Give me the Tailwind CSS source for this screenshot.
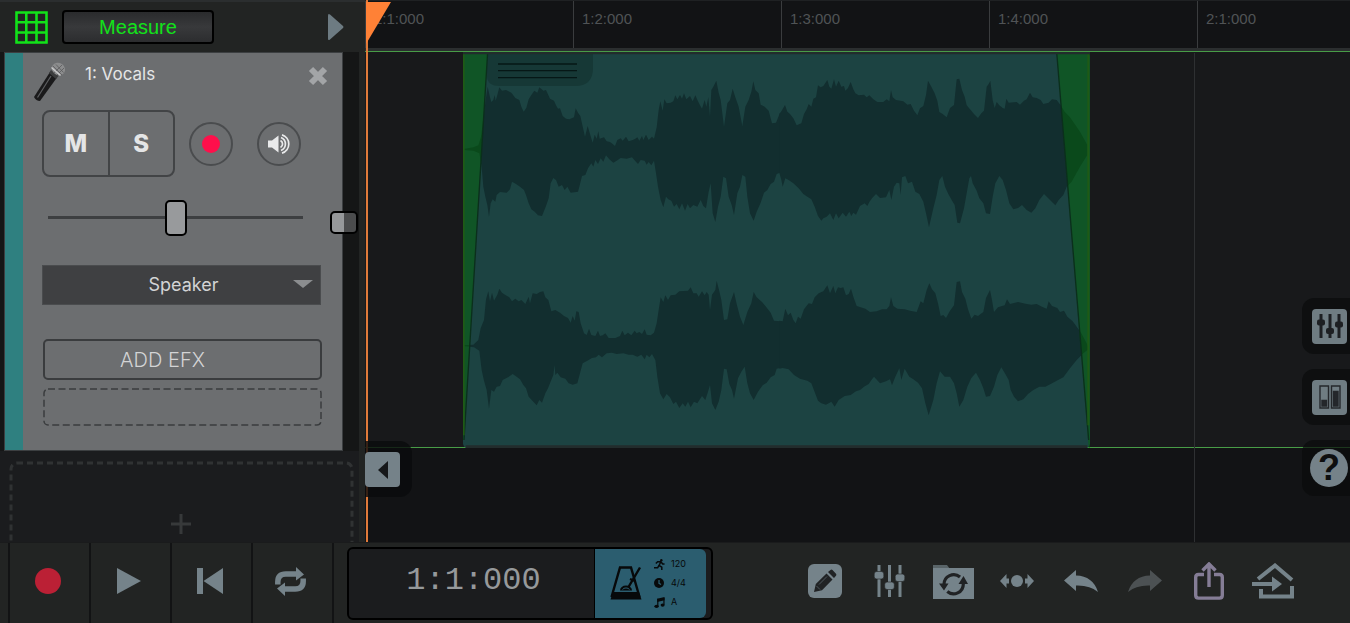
<!DOCTYPE html>
<html lang="en">
<head>
  <meta charset="UTF-8" />
  <meta name="viewport" content="width=device-width, initial-scale=1.0"/>
  <title>Multitrack Editor</title>
  <script src="https://cdn.jsdelivr.net/npm/@tailwindcss/browser@4"></script>
</head>
<body class="min-h-screen flex flex-col overflow-hidden bg-[#121315] text-[#e4e5e6] font-['Inter',sans-serif]">

  <main class="flex flex-1">
    <!-- Track list -->
    <section class="w-[365px] shrink-0 flex flex-col bg-[#222423]">
      <header class="h-[52px] flex items-center pl-[14px] pr-[21px] border-t-2 border-[#2b2e2f]">
        <button type="button" aria-label="Grid">
          <svg class="size-[34px]" viewBox="0 0 34 34" fill="none" stroke="#12e21a" stroke-width="2.6">
            <path d="M2.5 2.5h30v30h-30zM12.3 2.5v30M22.5 2.5v30M2.5 12.3h30M2.5 22.5h30"/>
          </svg>
        </button>
        <button type="button" class="ml-[14px] h-[34px] w-[152px] rounded border-2 border-black bg-linear-to-b from-[#2a2b2d] via-[#38393b] to-[#2c2d2f] text-xl leading-none text-[#12e21a] font-['Liberation_Sans',sans-serif]">Measure</button>
        <button type="button" aria-label="Expand" class="ml-auto">
          <svg class="w-4 h-7" viewBox="0 0 16 28" fill="#6d7b82"><path d="M0 2.5Q0 0 2 1.500L15 13q1 1 0 2L2 26.500Q0 28 0 25.500z"/></svg>
        </button>
      </header>

      <div class="relative flex mr-[6px] bg-[#151616]">
        <article class="ml-1 w-[339px] flex border border-[#3c3f41] bg-[#6c6e70]">
          <div class="w-[18px] bg-[#2f8080]"></div>
          <div class="flex-1 pl-[19px] pr-5 pt-[9px] pb-6">
            <div class="flex items-start">
              <svg class="-ml-2 w-8 h-10" viewBox="0 0 32 40">
                <path d="M0 35L16 10l7 5.500L6 39q-4 0-6-4z" fill="#1a1a1b"/>
                <path d="M3.500 35.500L17 14" stroke="#5d5f61" stroke-width="1.200"/>
                <path d="M15 11l2-3 7.500 6-2.500 3z" fill="#3b3c3d"/>
                <ellipse cx="24.500" cy="7" rx="6.800" ry="6" fill="#8b8c8d" transform="rotate(35 24.500 7)"/>
                <path d="M19 4l9 9M22 2.500l7.500 8M20 11l8-8M23 13l7-7" stroke="#5a5b5c" stroke-width=".8"/>
                <path d="M17.500 5.500l9 8" stroke="#c9cacb" stroke-width="1.300"/>
              </svg>
              <h2 class="ml-[19px] text-[17px] leading-6">1: Vocals</h2>
              <button type="button" aria-label="Remove track" class="ml-auto mt-1 -mr-1.5">
                <svg class="size-5" viewBox="0 0 20 20" stroke="#a3a5a7" stroke-width="6"><path d="M3 3l14 14M17 3L3 17"/></svg>
              </button>
            </div>

            <div class="mt-2 flex items-center">
              <div class="flex w-[133px] h-[67px] rounded-lg border-2 border-[#424446] text-2xl font-extrabold">
                <button type="button" class="flex-1 border-r-2 border-[#424446]">M</button>
                <button type="button" class="flex-1">S</button>
              </div>
              <button type="button" aria-label="Arm recording" class="ml-[14px] size-11 flex items-center justify-center rounded-full border-2 border-[#4a4c4e]">
                <span class="size-[18px] rounded-full bg-[#ff0f4b]"></span>
              </button>
              <button type="button" aria-label="Monitor" class="ml-6 size-11 flex items-center justify-center rounded-full border-2 border-[#4a4c4e]">
                <svg class="w-[22px] h-5" viewBox="0 0 22 20" fill="none" stroke="#e9eaeb" stroke-width="1.700">
                  <path d="M0 6.500h4L10.500 1.500v17L4 13.500H0z" fill="#e9eaeb" stroke="none"/>
                  <path d="M12.500 6.500a4 4 0 0 1 0 7M13 3.500a7 7 0 0 1 0 13M14 .9a9.500 9.500 0 0 1 0 18.200"/>
                </svg>
              </button>
            </div>

            <input type="range" aria-label="Pan" min="0" max="100" value="50" class="mt-[22px] ml-1.5 block w-[255px] h-9 appearance-none bg-transparent [&::-webkit-slider-runnable-track]:h-[3px] [&::-webkit-slider-runnable-track]:bg-[#3d3f41] [&::-webkit-slider-thumb]:appearance-none [&::-webkit-slider-thumb]:-mt-4 [&::-webkit-slider-thumb]:w-[22px] [&::-webkit-slider-thumb]:h-9 [&::-webkit-slider-thumb]:rounded-[5px] [&::-webkit-slider-thumb]:border-2 [&::-webkit-slider-thumb]:border-black [&::-webkit-slider-thumb]:bg-[#989a9c]"/>

            <div class="relative mt-[30px]">
              <select aria-label="Output" class="block w-[279px] h-10 appearance-none border border-[#4a4c4e] bg-[#3f4042] pl-6 pr-5 text-center [text-align-last:center] text-lg text-[#d3d4d5]">
                <option>Speaker</option>
                <option>Headphones</option>
              </select>
              <svg class="pointer-events-none absolute right-[9px] top-[15px] w-5 h-2" viewBox="0 0 20 8" fill="#8b8d8f"><path d="M0 0h20L10 8z"/></svg>
            </div>

            <button type="button" class="mt-[34px] ml-px block w-[279px] h-[41px] rounded-[5px] border-2 border-[#3a3c3e] pr-10 text-xl font-light text-[#d3d4d5]">ADD EFX</button>
            <svg class="mt-2 ml-px block w-[279px] h-[38px]" viewBox="0 0 279 38" fill="none" stroke="#3a3c3e" stroke-width="1.500" stroke-dasharray="7 3.500"><rect x="1" y="1" width="277" height="36" rx="4"/></svg>
          </div>
        </article>
        <button type="button" aria-label="Track volume" class="absolute right-px top-[159px] w-7 h-[23px] rounded-[5px] border-2 border-black bg-linear-to-r from-[#96989a] from-50% to-[#4b4c4d] to-50%"></button>
      </div>

      <div class="flex-1 mr-[6px] pl-[9px] pr-1 pt-[9px] bg-[#1b1c1e]">
        <button type="button" aria-label="Add track" class="relative block w-full h-full overflow-hidden">
          <svg class="absolute inset-0 w-[346px] h-[100px]" viewBox="0 0 346 100" fill="none" stroke="#303233" stroke-width="3" stroke-dasharray="6 4"><rect x="2" y="3" width="341" height="110" rx="6"/></svg>
          <svg class="absolute left-[162px] bottom-2 size-5" viewBox="0 0 20 20" stroke="#37393a" stroke-width="3"><path d="M10 0v20M0 10h20"/></svg>
        </button>
      </div>
    </section>

    <!-- Timeline -->
    <section class="relative flex-1 flex flex-col min-w-0 overflow-hidden">
      <div class="h-12 flex overflow-hidden border-t border-[#1f2123] bg-[#121315] font-['Liberation_Sans',sans-serif] text-[15px] leading-9 text-[#505355]">
        <div class="w-52 shrink-0 border-l border-[#3a3c3e] pl-2">1:1:000</div>
        <div class="w-52 shrink-0 border-l border-[#3a3c3e] pl-2">1:2:000</div>
        <div class="w-52 shrink-0 border-l border-[#3a3c3e] pl-2">1:3:000</div>
        <div class="w-52 shrink-0 border-l border-[#3a3c3e] pl-2">1:4:000</div>
        <div class="w-52 shrink-0 border-l border-[#3a3c3e] pl-2">2:1:000</div>
      </div>
      <div class="h-[3px] bg-[#2b2e2f]"></div>
      <div class="h-px bg-[#489c47]"></div>
      <div class="relative h-[395px] bg-[#18191b]">
        <!-- Audio clip with fades, three units per pixel -->
        <svg class="absolute left-[98px] top-0 w-[627px] h-[396px]" viewBox="0 0 1881 1188">
          <rect width="1881" height="1188" rx="14" fill="#1c4342"/>
          <path d="M72 0H390V48q0 54-54 54H110q-38 0-38-30z" fill="#163836"/>
          <path d="M105 36H342M105 56H342M105 77H342" stroke="#061716" stroke-width="4"/>
          <g fill="#122e2f">
            <polygon transform="translate(-39 -36)" points="40,327 70,322 85,316 93,290 100,235 107,180 113,140 119,168 124,186 130,180 134,165 137,182 142,165 148,142 156,152 168,150 184,158 196,174 208,180 214,200 221,215 229,204 236,178 244,165 253,152 262,158 268,142 280,152 288,150 300,176 312,182 318,196 324,206 330,205 338,228 348,236 358,238 372,232 377,205 384,218 391,228 397,255 405,290 413,258 420,282 428,308 434,284 440,296 445,274 449,296 462,292 470,304 480,306 488,312 495,318 502,300 512,295 518,302 528,290 536,304 548,300 556,296 562,292 568,302 576,288 580,300 588,284 596,300 606,290 612,296 620,262 626,210 631,184 638,212 643,178 650,190 662,188 670,184 676,166 682,178 690,165 696,176 702,160 709,178 720,168 728,184 736,166 744,184 750,196 756,206 764,180 769,200 775,172 780,230 784,150 790,140 799,122 806,158 812,180 822,260 832,190 840,180 848,146 856,172 866,200 877,258 886,200 896,180 904,155 910,124 916,150 926,160 932,194 944,200 956,212 966,250 978,248 990,218 990,398 980,402 972,425 962,432 952,450 942,458 932,488 920,515 911,542 900,520 892,470 886,410 877,405 870,440 862,460 852,525 845,495 836,470 828,415 820,410 812,470 804,500 796,546 788,520 782,430 776,455 768,505 760,498 752,480 742,500 730,495 720,505 713,492 705,512 696,490 688,508 680,492 672,500 664,482 655,478 648,470 640,502 632,480 624,440 618,400 612,362 604,376 596,366 590,374 584,362 572,360 564,372 555,362 546,352 530,356 512,354 500,362 490,368 478,358 468,346 460,365 452,355 444,372 436,360 430,380 424,370 414,385 406,405 396,408 388,440 384,455 362,458 352,440 344,450 336,435 326,440 318,420 310,414 302,430 296,475 288,498 276,528 264,526 254,515 244,508 236,490 228,465 222,450 210,440 198,432 186,425 180,448 170,458 150,456 140,465 136,485 128,478 122,490 117,530 112,495 106,470 100,440 95,380 88,340 70,332 40,330"/>
            <polygon transform="translate(921 -36)" points="28,222 34,214 45,195 52,215 60,222 70,235 80,256 94,250 102,222 110,208 116,192 124,200 130,176 138,172 144,136 152,142 160,138 172,120 178,140 184,146 192,118 198,140 206,122 214,140 222,138 226,152 234,144 242,126 250,148 256,160 266,166 282,164 290,172 298,166 310,178 322,186 340,186 350,178 358,184 363,150 368,172 378,180 400,184 412,194 422,192 432,212 442,226 450,205 460,198 468,165 474,122 484,140 494,160 502,182 508,216 518,222 530,232 540,204 552,195 560,118 568,116 576,150 584,170 590,196 602,210 612,222 624,234 634,220 642,212 650,140 656,132 661,122 668,180 674,204 680,186 688,196 698,204 704,206 709,176 716,188 740,186 750,194 762,182 770,178 780,158 788,172 800,174 812,180 820,192 836,188 846,178 860,180 872,196 884,215 900,232 930,275 952,315 952,345 930,380 905,425 890,440 880,465 866,480 856,496 846,486 834,474 822,462 808,480 796,505 784,518 770,510 756,495 744,504 730,508 718,490 708,450 698,420 688,408 676,430 668,470 660,522 648,520 640,490 628,475 620,452 608,430 603,408 598,415 590,460 582,505 570,550 562,548 554,495 545,480 535,462 525,440 517,408 508,420 500,465 490,505 477,562 468,520 460,485 448,462 436,455 426,425 414,430 406,408 396,412 392,465 388,430 380,428 372,440 364,480 358,450 348,472 330,474 318,462 306,475 298,486 292,498 284,490 270,498 258,524 250,518 244,528 238,515 228,530 218,518 206,535 198,520 190,540 180,520 170,530 160,535 154,542 144,528 134,500 124,478 112,470 100,462 86,445 70,430 56,420 46,415 38,440 34,420 28,398"/>
            <polygon transform="translate(-39 624)" points="40,256 70,254 85,240 92,205 102,180 108,118 115,94 120,124 126,98 132,122 142,104 148,86 156,98 166,105 178,112 186,124 196,116 206,124 214,120 226,132 236,110 240,130 248,100 260,102 270,96 280,94 286,112 295,120 304,154 316,150 330,158 342,168 354,174 362,188 368,168 374,182 379,154 386,156 392,190 402,220 410,225 417,206 424,225 436,228 444,212 450,228 458,226 466,220 476,234 496,234 510,228 517,212 524,226 534,218 544,226 554,212 560,220 568,216 576,222 584,208 590,224 602,226 612,218 620,190 626,150 632,112 640,126 646,106 654,120 662,106 676,104 688,94 714,92 722,82 730,100 740,100 746,110 756,94 764,106 770,96 776,104 780,150 786,104 796,90 800,62 808,94 814,120 822,180 832,178 840,130 852,96 860,132 870,170 880,195 892,156 904,130 911,96 920,112 936,126 948,140 962,158 972,182 990,184 990,324 980,326 974,345 962,352 950,368 938,376 924,395 911,420 900,400 892,370 884,320 874,335 864,355 852,416 846,390 838,372 830,328 822,326 814,390 806,425 796,450 786,430 780,375 774,395 766,420 756,408 742,430 732,425 722,442 714,425 706,440 698,430 688,444 678,425 670,432 660,412 650,402 640,418 630,400 622,350 616,300 606,282 598,292 590,284 584,298 574,284 562,290 548,284 536,284 520,280 500,282 486,278 470,280 456,292 446,284 438,292 426,294 412,302 398,310 390,340 382,370 368,374 356,370 346,356 332,352 322,338 316,345 314,315 310,345 300,370 294,385 286,400 276,428 268,420 260,436 250,425 236,410 228,385 220,375 210,358 200,350 188,342 174,352 158,360 150,378 140,380 132,395 124,390 117,446 110,390 102,362 95,330 88,272 72,262 40,258"/>
            <polygon transform="translate(921 624)" points="28,182 38,184 46,146 54,166 62,158 70,180 77,190 84,170 92,176 102,148 116,130 126,132 134,112 146,100 160,94 172,76 180,100 190,78 196,100 204,82 212,84 220,82 228,106 236,102 243,86 250,110 260,138 272,142 286,146 300,156 320,154 336,148 350,148 358,138 363,112 370,138 382,146 404,148 420,152 440,156 452,124 460,130 470,90 478,70 486,88 496,100 504,130 512,168 520,165 528,174 540,152 552,136 560,66 570,64 576,96 586,116 594,148 604,176 614,164 624,168 640,156 648,114 660,90 666,120 672,156 684,142 696,138 704,136 711,118 720,132 744,126 770,132 784,134 800,132 816,140 830,146 836,124 846,138 862,144 870,156 882,152 892,170 908,184 920,200 934,220 950,250 955,262 955,268 940,280 920,300 900,325 880,352 860,362 842,372 826,380 808,380 790,390 774,402 760,418 744,424 732,410 722,390 716,360 706,342 694,322 682,345 672,380 660,408 648,410 640,385 630,360 618,338 604,354 592,380 580,420 568,440 560,400 552,370 540,350 524,350 510,334 500,370 490,420 476,466 466,430 456,385 444,368 430,358 418,350 404,326 394,360 388,325 376,350 366,376 360,358 348,364 330,370 312,350 306,358 296,372 282,380 270,390 258,394 242,405 224,408 206,420 194,440 184,425 168,434 154,430 144,422 134,396 124,370 112,362 90,356 72,345 56,328 38,324 28,326"/>
          </g>
          <path d="M0 0H74L3 1164H0zM1781 0H1881V1188H1877z" fill="#007000" fill-opacity=".42"/>
          <path d="M74 0L3 1164M1781 0L1877 1164" stroke="#0b2f1c" stroke-width="4"/>
          <path d="M2 0V1150M1876 0V1120" stroke="#1f5a16" stroke-width="6"/>
          <path d="M0 3H1881M8 1184H1873" stroke="#222c2c" stroke-width="8"/>
        </svg>
      </div>
      <div class="h-px bg-[#489c47]"></div>
      <div class="flex-1 bg-[#121315]"></div>

      <!-- Bar line, playhead and floating buttons -->
      <div class="absolute left-[829px] top-[53px] bottom-0 w-px bg-[#2e3032]"></div>
      <div class="absolute left-px top-0 bottom-0 w-0.5 bg-[#e07a3a]"></div>
      <svg class="absolute left-px top-0.5 w-[25px] h-[42px]" viewBox="0 0 25 42"><path d="M0 0h25L0 42z" fill="#ff8136"/></svg>

      <div class="absolute left-0 top-[441px] w-[47px] h-14 rounded-r-xl bg-[#0a0b0c]/80 pt-[11px]">
        <button type="button" aria-label="Collapse track list" class="size-[35px] flex items-center justify-center rounded bg-[#758289]">
          <svg class="w-2.5 h-[18px]" viewBox="0 0 10 18" fill="#16181a"><path d="M10 0v18L0 9z"/></svg>
        </button>
      </div>

      <div class="absolute right-0 top-[298px] flex flex-col gap-[15px]">
        <div class="w-12 h-14 rounded-l-xl bg-[#0a0b0c]/70 flex items-center justify-end pr-[3px]">
          <button type="button" aria-label="Mixer" class="size-[35px] rounded bg-[#6f7c82] flex items-center justify-center">
            <svg class="w-[26px] h-[26px]" viewBox="0 0 26 26" fill="#1d1f22"><path d="M2.500 1h3v24h-3zM11.500 1h3v24h-3zM20.500 1h3v24h-3z"/><rect y="6.500" width="8" height="6" rx="2"/><rect x="9" y="15" width="8" height="6" rx="2"/><rect x="18" y="8.500" width="8" height="6" rx="2"/></svg>
          </button>
        </div>
        <div class="w-12 h-14 rounded-l-xl bg-[#0a0b0c]/70 flex items-center justify-end pr-[3px]">
          <button type="button" aria-label="Level meters" class="size-[35px] rounded bg-[#6f7c82] flex items-center justify-center">
            <svg class="w-[22px] h-6" viewBox="0 0 22 24" fill="none" stroke="#24272b" stroke-width="1.400"><path d="M1 1h8.500v22H1zM12.500 1H21v22h-8.500z"/><path d="M3 15.500h4.500V21H3zM14.500 6.500H19V21h-4.500z" fill="#24272b"/></svg>
          </button>
        </div>
        <div class="w-12 h-14 rounded-l-xl bg-[#0a0b0c]/70 flex items-center justify-end pr-0.5">
          <button type="button" class="size-[38px] rounded-full bg-[#758289] text-4xl leading-[38px] font-bold text-[#0d0e0f] font-['Liberation_Sans',sans-serif]">?</button>
        </div>
      </div>
    </section>
  </main>

  <!-- Transport bar -->
  <footer class="h-[81px] flex items-center pl-2 pr-[45px] border-t border-[#1a1b1c] bg-[#222423] text-[#75838a]">
    <div class="h-full flex border-r-2 border-[#121314]">
      <button type="button" aria-label="Record" class="w-[81px] flex items-center justify-center pb-1 pr-1 border-l-2 border-[#121314]">
        <span class="size-[26px] rounded-full bg-[#bb2035]"></span>
      </button>
      <button type="button" aria-label="Play" class="w-[81px] flex items-center justify-center pb-1 pr-1 border-l-2 border-[#121314]">
        <svg class="w-6 h-[26px]" viewBox="0 0 24 26" fill="currentColor"><path d="M0 0l24 13L0 26z"/></svg>
      </button>
      <button type="button" aria-label="Rewind" class="w-[81px] flex items-center justify-center pb-1 pr-1 border-l-2 border-[#121314]">
        <svg class="w-[26px] h-[26px]" viewBox="0 0 26 26" fill="currentColor"><path d="M0 0h6v26H0zM26 0v26L6.500 13z"/></svg>
      </button>
      <button type="button" aria-label="Loop" class="w-[81px] flex items-center justify-center pb-1 pr-1 border-l-2 border-[#121314]">
        <svg class="w-[31px] h-[29px]" viewBox="0 0 31 29" fill="none" stroke="currentColor" stroke-width="5.500">
          <path d="M2.800 17.500v-2.500q0-8 8-8H21M28.200 11.500v2.500q0 8-8 8H10"/>
          <path d="M21 0l8 7.500-8 6zM10 29l-8-7.500 8-6z" fill="currentColor" stroke="none"/>
        </svg>
      </button>
    </div>

    <div class="ml-[13px] w-[366px] h-[73px] flex rounded-md border-2 border-black bg-[#1b1c1e] pr-[5px]">
      <output class="flex-1 flex items-center justify-center pb-1 pl-1 text-[32px] leading-none text-[#96999b] font-['Liberation_Mono',monospace]">1:1:000</output>
      <button type="button" class="w-[112px] flex items-center justify-center gap-3 pr-1 rounded-r-md border-l border-black bg-[#2b5d6f] text-[#07090a]">
        <svg class="w-8 h-[34px]" viewBox="0 0 32 34" fill="none" stroke="currentColor" stroke-width="2.400">
          <path d="M1.500 31L10 1.500h11L29.500 31"/>
          <path d="M3 26h26l2.500 7.500H.5z" fill="currentColor" stroke="none"/>
          <path d="M18.500 21L30 1.500M20 13l5 2"/>
          <path d="M10 24.500a6 5 0 0 1 12 0z" fill="currentColor" stroke="none"/>
          <path d="M12.500 23.500a4 3 0 0 1 7 0" stroke="#2b5d6f" stroke-width="1"/>
        </svg>
        <span class="grid grid-cols-[11px_16px] items-center gap-x-1.5 gap-y-[3px] text-left text-[9px] leading-4">
          <svg class="size-[11px]" viewBox="0 0 12 12" fill="none" stroke="currentColor" stroke-width="1.600"><circle cx="8" cy="1.300" r="1.300" fill="currentColor" stroke="none"/><path d="M7.500 3L5.500 7l3 2v3M5.500 7L4 9.500H0M2 5l2-2h3.500l2 2.500h2"/></svg>
          <span>120</span>
          <svg class="size-[10px]" viewBox="0 0 12 12"><circle cx="6" cy="6" r="6" fill="currentColor"/><path d="M6 2.500V6.500l2.500 1.300" fill="none" stroke="#2b5d6f" stroke-width="1.500"/></svg>
          <span>4/4</span>
          <svg class="size-[11px]" viewBox="0 0 12 12" fill="currentColor"><path d="M3.500 2L11.500 0v3.500l-8 2z"/><path d="M3.500 2h1.300v8H3.500zM10.200 1h1.300v7.500h-1.300z"/><ellipse cx="2.800" cy="10.200" rx="2.400" ry="1.700"/><ellipse cx="9.400" cy="8.800" rx="2.200" ry="1.700"/></svg>
          <span>A</span>
        </span>
      </button>
    </div>

    <nav aria-label="Tools" class="ml-auto pb-1 flex items-center">
      <button type="button" aria-label="Edit" class="w-16 flex justify-center">
        <svg class="size-[34px]" viewBox="0 0 34 34"><rect width="34" height="34" rx="6" fill="currentColor"/><path d="M6 28l1.800-8L18.500 9.500l6 6L14 26.300zM20 8l2.500-2q1-.8 2 .1l3.500 3.600q.8 1 0 2L26 14z" fill="#202224"/><path d="M11 20.500l8-8M8.500 22l3.500 3.500" stroke="#4d565b" stroke-width="1"/></svg>
      </button>
      <button type="button" aria-label="Mixer view" class="w-16 flex justify-center">
        <svg class="w-[31px] h-8" viewBox="0 0 31 32" fill="currentColor"><path d="M3.500 0h3v32h-3zM14 0h3v32h-3zM24.500 0h3v32h-3z"/><g stroke="#222423" stroke-width=".6"><rect x=".2" y="6.500" width="9.600" height="7.500" rx="2.500"/><rect x="10.700" y="17" width="9.600" height="7.500" rx="2.500"/><rect x="21.200" y="9" width="9.600" height="7.500" rx="2.500"/></g></svg>
      </button>
      <button type="button" aria-label="Project files" class="w-16 flex justify-center">
        <svg class="w-[41px] h-[35px]" viewBox="0 0 41 35"><path d="M0 1h14l3 4H0z" fill="#596468"/><path d="M0 4h41v31H0z" fill="currentColor"/><g fill="none" stroke="#202224" stroke-width="3.200"><path d="M11 20.500a9.700 9.700 0 0 1 16-7.500M30.300 20a9.700 9.700 0 0 1-16 7.500"/></g><path d="M6 19.500h9.500L11 26.500zM25.500 20H35L30.500 12z" fill="#202224"/></svg>
      </button>
      <button type="button" aria-label="Nudge" class="w-16 flex justify-center">
        <svg class="w-[34px] h-3.5" viewBox="0 0 34 14" fill="currentColor"><circle cx="17" cy="7" r="6"/><path d="M0 7l6.500-7v4.500H9v5H6.500V14zM34 7l-6.500-7v4.500H25v5h2.500V14z"/></svg>
      </button>
      <button type="button" aria-label="Undo" class="w-16 flex justify-center">
        <svg class="w-[34px] h-[22px]" viewBox="0 0 34 22" fill="currentColor"><path d="M0 10.500L12 0v5.500q17 .5 22 16.500-8-7-22-6.500V21z"/></svg>
      </button>
      <button type="button" aria-label="Redo" class="w-16 flex justify-center text-[#4c5153]">
        <svg class="w-[34px] h-[22px]" viewBox="0 0 34 22" fill="currentColor"><path d="M34 10.500L22 0v5.500Q5 6 0 22q8-7 22-6.500V21z"/></svg>
      </button>
      <button type="button" aria-label="Share" class="w-16 flex justify-center text-[#857d96]">
        <svg class="w-[30px] h-[38px]" viewBox="0 0 30 38" fill="none" stroke="currentColor" stroke-width="3.400"><path d="M10 12.500H4.500q-2.800 0-2.800 2.800v18q0 2.800 2.800 2.800h21q2.800 0 2.800-2.800v-18q0-2.800-2.800-2.800H20M15 25V3M8.500 8.500L15 2l6.500 6.500"/></svg>
      </button>
      <button type="button" aria-label="Home" class="w-16 flex justify-center">
        <svg class="w-[42px] h-9" viewBox="0 0 42 36" fill="none" stroke="currentColor" stroke-width="4"><path d="M6 16L23 2.500 40 17M9 26v7.500h31V23"/><path d="M0 21h21"/><path d="M20 13.500L30 21l-10 7.500z" fill="currentColor" stroke="none"/></svg>
      </button>
    </nav>
  </footer>
</body>
</html>
